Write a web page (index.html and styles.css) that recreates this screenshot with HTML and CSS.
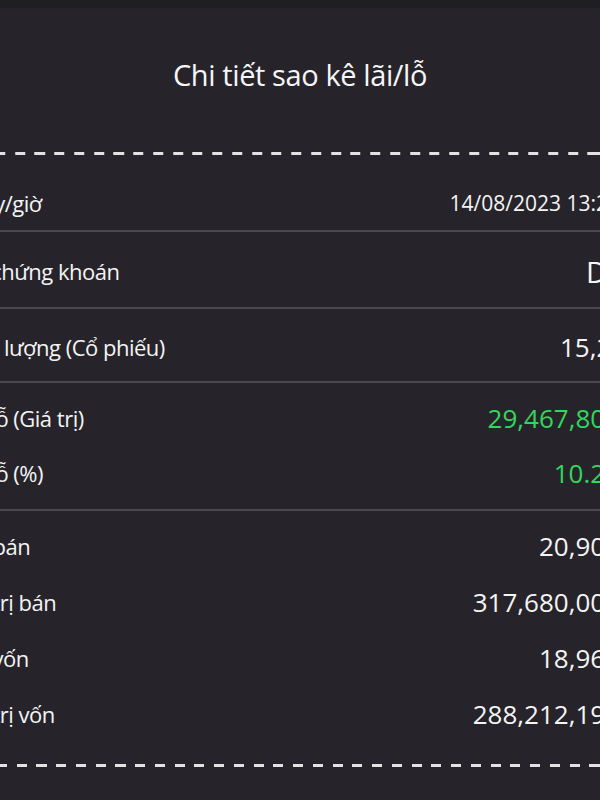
FILE: index.html
```html
<!DOCTYPE html>
<html lang="vi">
<head>
<meta charset="utf-8">
<title>Chi tiết sao kê lãi/lỗ</title>
<link rel="stylesheet" href="styles.css">
</head>
<body>
  <div class="statusbar"></div>
  <header class="head">
    <h1 class="title">Chi tiết sao kê lãi/lỗ</h1>
  </header>
  <div class="dash dash--top"></div>
  <main class="sheet">
    <div class="row row--first">
      <span class="label">Ngày/giờ</span>
      <span class="value value--date">14/08/2023 13:25</span>
    </div>
    <div class="row row--wide row--code">
      <span class="label">Mã chứng khoán</span>
      <span class="value value--code">DXG</span>
    </div>
    <div class="row row--wide">
      <span class="label">Khối lượng (Cổ phiếu)</span>
      <span class="value">15,200</span>
    </div>
    <div class="group group--pnl">
      <div class="item">
        <span class="label">Lãi/lỗ (Giá trị)</span>
        <span class="value value--up">29,467,805</span>
      </div>
      <div class="item">
        <span class="label">Lãi/lỗ (%)</span>
        <span class="value value--up">10.22</span>
      </div>
    </div>
    <div class="group group--price">
      <div class="item item--tall">
        <span class="label">Giá bán</span>
        <span class="value">20,900</span>
      </div>
      <div class="item item--tall">
        <span class="label">Giá trị bán</span>
        <span class="value">317,680,000</span>
      </div>
      <div class="item item--tall">
        <span class="label">Giá vốn</span>
        <span class="value">18,961</span>
      </div>
      <div class="item item--tall">
        <span class="label">Giá trị vốn</span>
        <span class="value">288,212,195</span>
      </div>
    </div>
  </main>
  <div class="dash dash--bottom"></div>
</body>
</html>
```

FILE: styles.css
```css
html, body {
  margin: 0;
  padding: 0;
  width: 600px;
  height: 800px;
  overflow: hidden;
  background: #26242a;
}

body {
  font-family: "Open Sans", "Noto Sans", sans-serif;
  color: #f4f4f4;
}

.statusbar {
  height: 8px;
  background: #1f1e23;
}

.head {
  box-sizing: border-box;
  height: 144px;
  padding-top: 47px;
  text-align: center;
}

.title {
  margin: 0;
  font-size: 29px;
  font-weight: 400;
  line-height: 40px;
  letter-spacing: -0.4px;
  color: #f6f6f6;
}

.dash {
  height: 3px;
  background-image: repeating-linear-gradient(90deg, #e2e2e2 0 10px, transparent 10px 19.75px);
}

.dash--top {
  background-position: -4.75px 0;
}

.dash--bottom {
  background-position: -3px 0;
}

.sheet {
  margin: 0 -20px 0 -45px;
}

.row,
.item {
  display: flex;
  justify-content: space-between;
  align-items: center;
}

.row {
  box-sizing: border-box;
  border-bottom: 2px solid #4b494f;
}

.row--first {
  height: 77px;
  padding-top: 21px;
}

.row--wide {
  height: 77px;
  padding-top: 3px;
  margin-right: -21px;
}

.row--code {
  margin-right: -25px;
}

.row--wide + .row--wide {
  height: 74px;
  padding-top: 3px;
}

.group {
  box-sizing: border-box;
}

.group--pnl {
  height: 128px;
  padding-top: 7.7px;
  border-bottom: 2px solid #4b494f;
}

.item {
  height: 55px;
}

.item--tall {
  height: 55.8px;
}

.group--price {
  height: 253px;
  padding-top: 7.6px;
}

.label {
  font-size: 22px;
  line-height: 1;
  letter-spacing: -0.5px;
  white-space: nowrap;
}

.value {
  font-size: 26px;
  line-height: 1;
  white-space: nowrap;
}

.value--date {
  font-size: 21px;
}

.value--code {
  font-size: 29px;
}

.value--up {
  color: #34d65c;
}
```
